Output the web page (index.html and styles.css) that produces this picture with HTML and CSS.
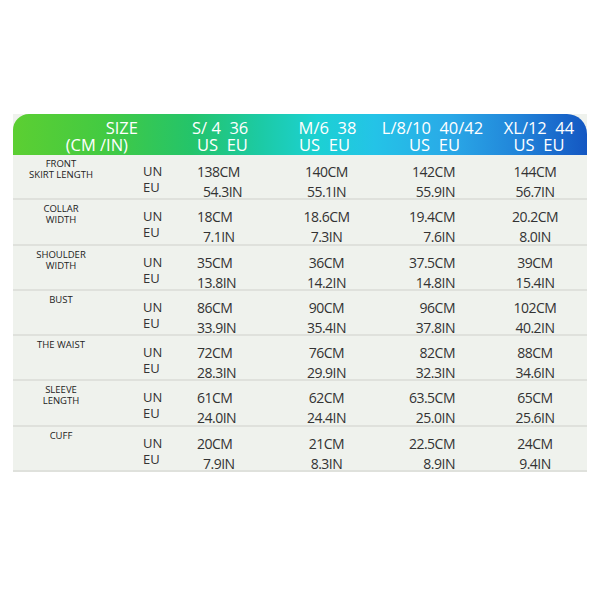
FILE: index.html
```html
<!DOCTYPE html>
<html>
<head>
<meta charset="utf-8">
<link rel="stylesheet" href="styles.css">
</head>
<body>
<div class="chart">
  <div class="head">
    <div class="hcell hlabel"><span class="size">SIZE</span><span class="unit">(CM /IN)</span></div>
    <div class="hcell hs"><span>S/ 4&nbsp;&nbsp;36</span><span class="us">US&nbsp;&nbsp;EU</span></div>
    <div class="hcell hm"><span>M/6&nbsp;&nbsp;38</span><span class="us">US&nbsp;&nbsp;EU</span></div>
    <div class="hcell hl"><span>L/8/10&nbsp;&nbsp;40/42</span><span class="us">US&nbsp;&nbsp;EU</span></div>
    <div class="hcell hxl"><span>XL/12&nbsp;&nbsp;44</span><span class="us">US&nbsp;&nbsp;EU</span></div>
  </div>

  <div class="row">
    <div class="label">FRONT<br>SKIRT LENGTH</div>
    <div class="ue"><span>UN</span><span>EU</span></div>
    <div class="val cs"><span>138CM</span><span class="nudge">54.3IN</span></div>
    <div class="val cm"><span>140CM</span><span>55.1IN</span></div>
    <div class="val cl"><span>142CM</span><span>55.9IN</span></div>
    <div class="val cx"><span>144CM</span><span>56.7IN</span></div>
  </div>
  <div class="row">
    <div class="label">COLLAR<br>WIDTH</div>
    <div class="ue"><span>UN</span><span>EU</span></div>
    <div class="val cs"><span>18CM</span><span class="nudge">7.1IN</span></div>
    <div class="val cm"><span>18.6CM</span><span>7.3IN</span></div>
    <div class="val cl"><span>19.4CM</span><span>7.6IN</span></div>
    <div class="val cx"><span>20.2CM</span><span>8.0IN</span></div>
  </div>
  <div class="row">
    <div class="label">SHOULDER<br>WIDTH</div>
    <div class="ue"><span>UN</span><span>EU</span></div>
    <div class="val cs"><span>35CM</span><span>13.8IN</span></div>
    <div class="val cm"><span>36CM</span><span>14.2IN</span></div>
    <div class="val cl"><span>37.5CM</span><span>14.8IN</span></div>
    <div class="val cx"><span>39CM</span><span>15.4IN</span></div>
  </div>
  <div class="row">
    <div class="label">BUST</div>
    <div class="ue"><span>UN</span><span>EU</span></div>
    <div class="val cs"><span>86CM</span><span>33.9IN</span></div>
    <div class="val cm"><span>90CM</span><span>35.4IN</span></div>
    <div class="val cl"><span>96CM</span><span>37.8IN</span></div>
    <div class="val cx"><span>102CM</span><span>40.2IN</span></div>
  </div>
  <div class="row">
    <div class="label">THE WAIST</div>
    <div class="ue"><span>UN</span><span>EU</span></div>
    <div class="val cs"><span>72CM</span><span>28.3IN</span></div>
    <div class="val cm"><span>76CM</span><span>29.9IN</span></div>
    <div class="val cl"><span>82CM</span><span>32.3IN</span></div>
    <div class="val cx"><span>88CM</span><span>34.6IN</span></div>
  </div>
  <div class="row">
    <div class="label">SLEEVE<br>LENGTH</div>
    <div class="ue"><span>UN</span><span>EU</span></div>
    <div class="val cs"><span>61CM</span><span>24.0IN</span></div>
    <div class="val cm"><span>62CM</span><span>24.4IN</span></div>
    <div class="val cl"><span>63.5CM</span><span>25.0IN</span></div>
    <div class="val cx"><span>65CM</span><span>25.6IN</span></div>
  </div>
  <div class="row">
    <div class="label">CUFF</div>
    <div class="ue"><span>UN</span><span>EU</span></div>
    <div class="val cs"><span>20CM</span><span class="nudge">7.9IN</span></div>
    <div class="val cm"><span>21CM</span><span>8.3IN</span></div>
    <div class="val cl"><span>22.5CM</span><span>8.9IN</span></div>
    <div class="val cx"><span>24CM</span><span>9.4IN</span></div>
  </div>
</div>
</body>
</html>
```

FILE: styles.css
```css
* { box-sizing: border-box; }
html, body { margin: 0; padding: 0; background: #ffffff; }
body {
  font-family: "Open Sans", "Noto Sans", "DejaVu Sans", sans-serif;
  color: #2b2b2b;
}
.chart {
  width: 574px;
  margin: 114px 0 0 13px;
  background: #eff2ed;
}
.head {
  height: 41px;
  display: grid;
  grid-template-columns: 157px 105px 105px 105px 102px;
  border-radius: 16px 20px 0 0;
  background: linear-gradient(90deg, #5ccf32 0%, #43ca42 16%, #24c46a 31%, #1ccaa4 43%, #1cd1d3 53%, #24c3e7 63%, #2aa9e7 76%, #2184d9 88%, #1457c2 100%);
  color: #ffffff;
  font-size: 16.5px;
  line-height: 17px;
}
.hcell {
  display: flex;
  flex-direction: column;
  align-items: center;
  padding-top: 5px;
  white-space: nowrap;
}
.hlabel {
  align-items: flex-end;
  padding-right: 32px;
}
.hlabel .unit { margin-right: 10px; }
.hs { align-items: flex-start; padding-left: 22px; }
.hs .us { margin-left: 5px; }
.hm .us { margin-right: 6px; }
.hl .us { margin-left: 4px; }
.hxl { padding-left: 6px; }

.row {
  height: 45.3px;
  display: grid;
  grid-template-columns: 124px 33px 105px 105px 105px 102px;
  border-bottom: 2px solid #dfe1dc;
}
.label {
  font-size: 9.5px;
  line-height: 11px;
  text-align: center;
  padding-top: 3px;
  padding-right: 28px;
  color: #222;
  white-space: nowrap;
}
.ue {
  display: flex;
  flex-direction: column;
  padding-top: 8px;
  padding-left: 6px;
  font-size: 13px;
  line-height: 16px;
  color: #333;
}
.val {
  display: flex;
  flex-direction: column;
  padding-top: 7px;
  font-size: 14px;
  letter-spacing: -0.5px;
  line-height: 20px;
  color: #333;
}
.cs { align-items: flex-start; padding-left: 27px; }
.cs .nudge { margin-left: 6px; }
.cm { align-items: center; padding-right: 2px; }
.cl { align-items: flex-end; padding-right: 30px; }
.cx { align-items: center; padding-right: 2px; }
```
